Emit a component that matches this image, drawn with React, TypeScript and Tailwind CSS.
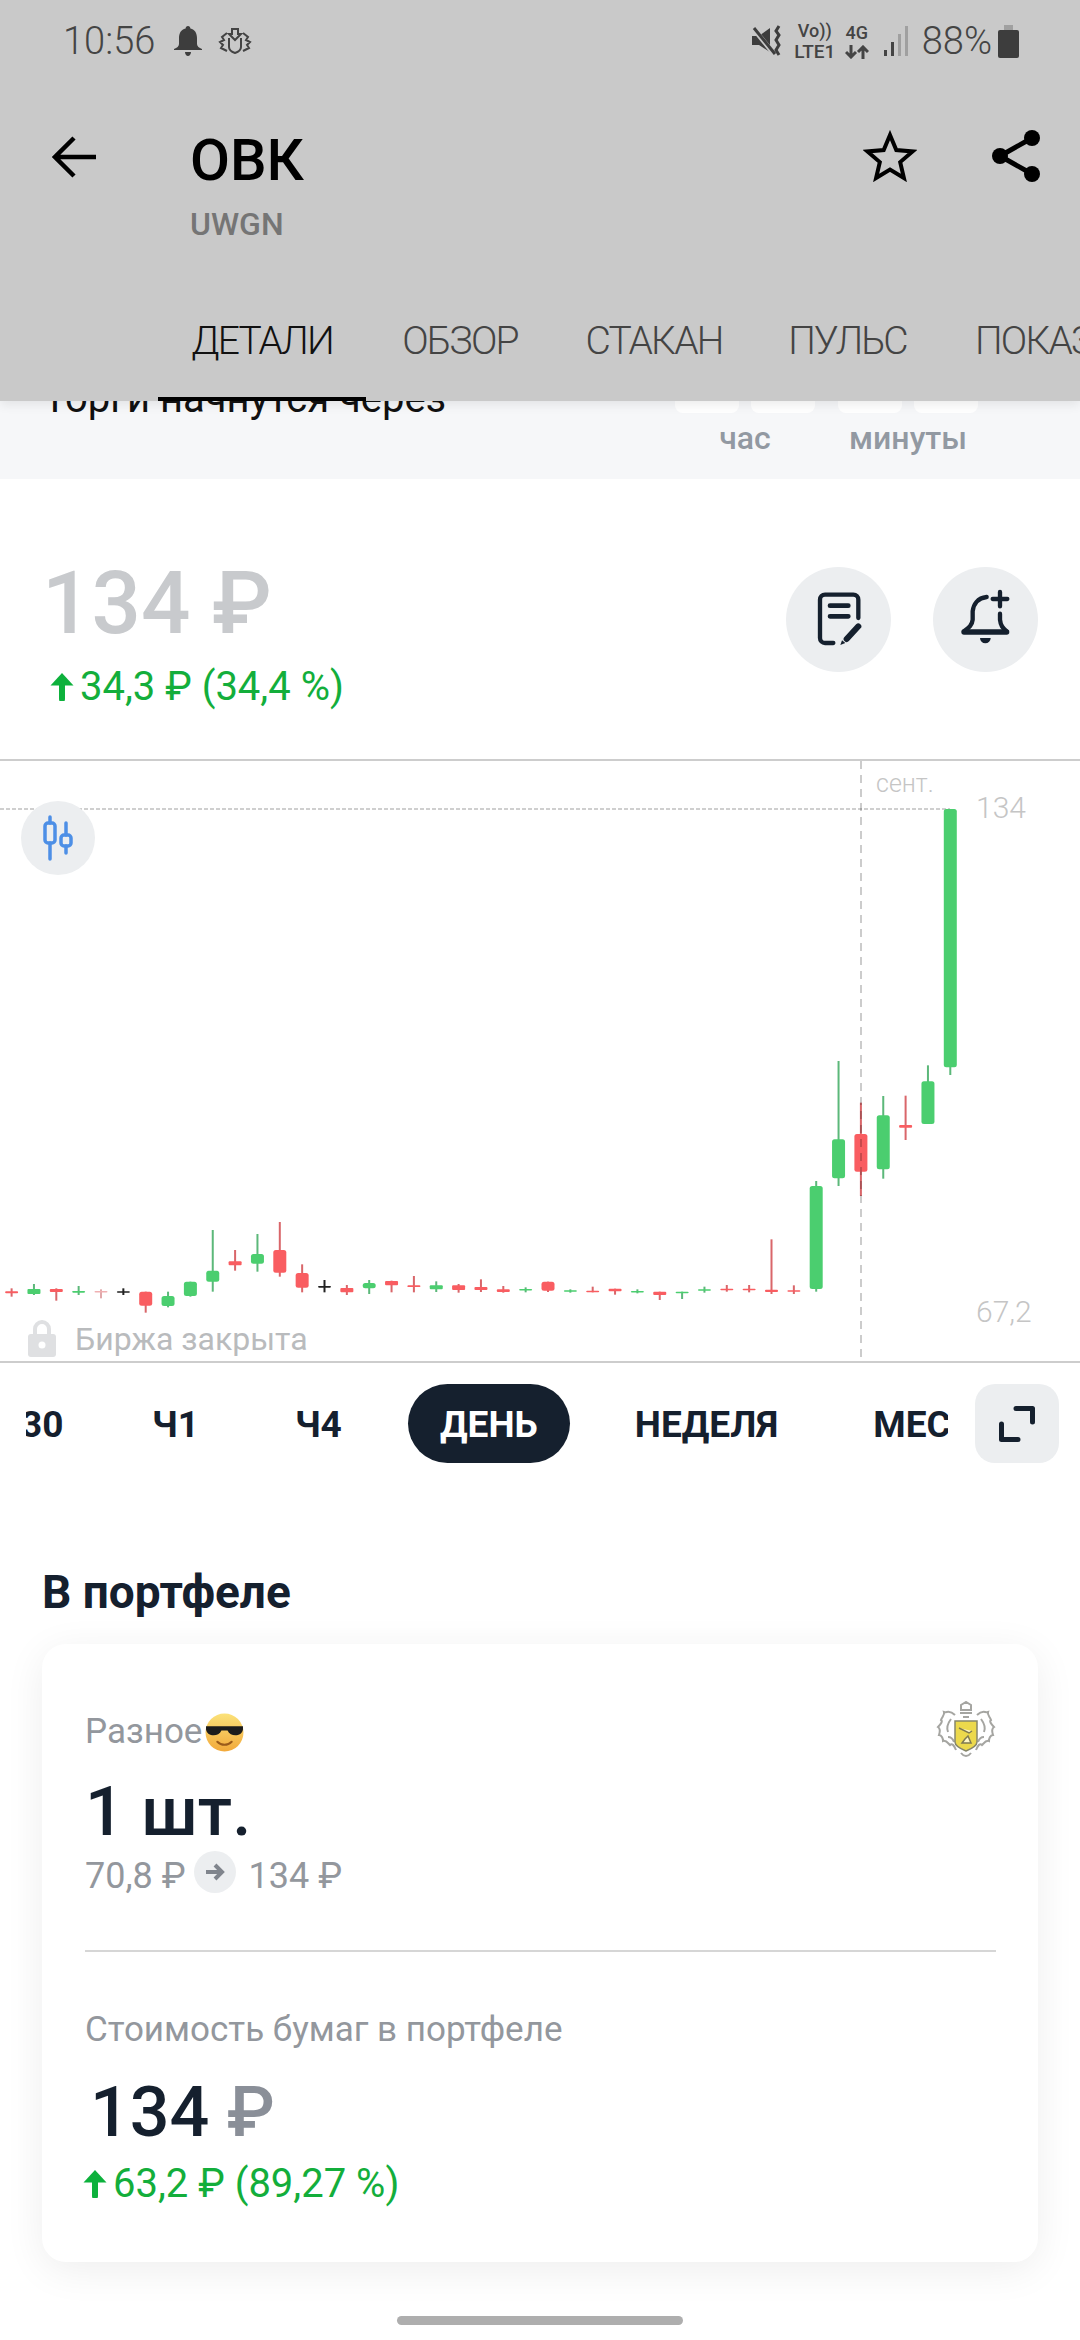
type Candle = [number, number, number, number, string];

// wick top, wick bottom, body top, body bottom, colour. y measured from 1160 on the left part, from 1000 on the right
const LEFT: Candle[] = [
  [385, 410, 394, 400, "r"], [372, 405, 387, 402, "g"], [385, 422, 387, 396, "r"], [378, 405, 393, 398, "g"],
  [388, 415, 393, 396, "l"], [385, 405, 394, 397, "k"], [395, 458, 395, 437, "r"], [395, 442, 408, 438, "g"],
  [365, 410, 365, 408, "g"], [210, 395, 332, 365, "g"], [270, 332, 304, 316, "r"], [222, 335, 282, 311, "g"],
  [186, 350, 270, 338, "r"], [313, 397, 339, 383, "r"], [360, 397, 378, 383, "k"], [375, 405, 384, 397, "r"],
  [360, 402, 369, 385, "g"], [362, 397, 363, 376, "r"], [348, 397, 376, 381, "r"], [364, 396, 376, 388, "g"],
  [372, 398, 376, 390, "r"], [358, 396, 381, 390, "r"], [378, 398, 388, 396, "r"], [382, 397, 387, 390, "g"],
];
const RIGHT: Candle[] = [
  [845, 876, 845, 872, "r"], [868, 878, 871, 874, "g"], [860, 877, 872, 875, "r"], [866, 884, 866, 874, "r"],
  [868, 880, 873, 876, "g"], [875, 900, 875, 885, "r"], [875, 897, 875, 878, "g"], [860, 878, 868, 872, "g"],
  [855, 875, 866, 870, "r"], [855, 877, 866, 870, "r"], [718, 882, 869, 876, "r"], [856, 882, 871, 874, "r"],
  [543, 875, 558, 867, "g"], [183, 558, 418, 535, "g"], [308, 588, 402, 515, "r"], [288, 536, 346, 508, "g"],
  [287, 420, 375, 383, "r"], [196, 372, 244, 372, "g"], [-573, 225, -573, 202, "g"],
];

const BODY: Record<string, string> = { r: "#f95d61", g: "#4bce6f", l: "#f0b0b2", k: "#222222" };
const WICK: Record<string, string> = { r: "#d9666a", g: "#5cb87a", l: "#e0a8aa", k: "#222222" };

function Candles() {
  const all = [
    ...LEFT.map((c) => ({ c, base: 1160 - 761 })),
    ...RIGHT.map((c) => ({ c, base: 1000 - 761 })),
  ];
  return (
    <svg className="absolute inset-0" width="1080" height="600" viewBox="0 0 1080 600">
      <line x1="0" y1="48" x2="950" y2="48" stroke="#cfcfcf" strokeWidth="2" strokeDasharray="4 2" />
      {all.map(({ c, base }, i) => {
        const x = 11.6 + 22.35 * i;
        const [wt, wb, bt, bb, col] = c;
        return (
          <g key={i}>
            <rect x={x - 1} y={base + wt / 3} width="2" height={(wb - wt) / 3} fill={WICK[col]} />
            <rect
              x={x - 6.5}
              y={base + bt / 3}
              width="13"
              height={Math.max((bb - bt) / 3, 1.5)}
              rx={(bb - bt) / 3 > 5 ? 2.5 : 1}
              fill={BODY[col]}
            />
          </g>
        );
      })}
      <line x1="861" y1="0" x2="861" y2="600" stroke="#000" strokeOpacity="0.2" strokeWidth="2" strokeDasharray="8 6" />
    </svg>
  );
}

function ArrowUp() {
  return (
    <svg width="24" height="28" viewBox="0 0 24 28" className="shrink-0">
      <path d="M12 26V8" stroke="#0db13c" strokeWidth="6" strokeLinecap="round" />
      <path d="M12 0L23.500 12.500H0.500Z" fill="#0db13c" />
    </svg>
  );
}

function Crest() {
  return (
    <svg width="60" height="58" viewBox="0 0 60 58" fill="none" stroke="#a5a5a1">
      <path d="M25 9V4l5-3 5 3v5z" strokeWidth="2" />
      <path d="M24 12h12M27 16h6" strokeWidth="2" />
      <path d="M19 14C13 8 11 12 8 11c1 3-2 5-3 8 2 1 0 4-3 7 3 2 2 5 1 8 3 0 4 4 4 6 3-1 5 2 7 4 2-2 4 0 6 5" strokeWidth="2" />
      <path d="M41 14C47 8 49 12 52 11c-1 3 2 5 3 8-2 1 0 4 3 7-3 2-2 5-1 8-3 0-4 4-4 6-3-1-5 2-7 4-2-2-4 0-6 5" strokeWidth="2" />
      <path d="M15 18c-3 4-5 8-3 13M45 18c3 4 5 8 3 13M12 36c3 0 5 2 6 5M48 36c-3 0-5 2-6 5" strokeWidth="2" />
      <path d="M25 52c3 4 7 4 10 0" strokeWidth="2" />
      <path d="M19 20H41V41C41 45 35 48 30 50C25 48 19 45 19 41Z" fill="#ecd94c" stroke="#86866a" strokeWidth="1.500" />
      <path d="M23 27l10 5 3-2M26 42h9l-3-7-3 3z" stroke="#7f7a50" strokeWidth="1.500" fill="#fff8c8" />
    </svg>
  );
}

function Emoji() {
  return (
    <svg width="39" height="39" viewBox="0 0 38 38" className="shrink-0">
      <defs>
        <linearGradient id="face" x1="0" y1="0" x2="0" y2="1">
          <stop offset="0" stopColor="#fbe27a" />
          <stop offset="1" stopColor="#f2a93a" />
        </linearGradient>
      </defs>
      <circle cx="19" cy="19" r="18.5" fill="url(#face)" />
      <path d="M1 13H37V16C36 23 25 24 22 17H16C13 24 2 23 1 16Z" fill="#1c1c1c" />
      <path d="M12 28C16 32 22 32 26 28" stroke="#9a5a1a" strokeWidth="2" fill="none" strokeLinecap="round" />
    </svg>
  );
}

export default function App() {
  return (
    <div className="relative h-[2340px] w-[1080px] overflow-hidden bg-white font-['Roboto',sans-serif] text-[#15202e]">
      {/* header */}
      <header className="relative z-10 h-[401px] bg-[#c9c9c9] shadow-[0_4px_10px_rgba(0,0,0,0.08)]">
        <div className="flex h-[82px] items-center pl-[63px] pr-[61px] text-[#444444]">
          <span className="text-[38px] font-light leading-none">10:56</span>
          <svg width="28" height="30" viewBox="0 0 28 30" className="ml-[19px]" fill="#3d3d3d">
            <path d="M14 0c1.500 0 2.300 1 2.400 2.400C21 3.500 23 7 23 12v6c0 2 2 4 5 5v1H0v-1c3-1 5-3 5-5v-6c0-5 2-8.500 6.600-9.600C11.700 1 12.500 0 14 0zM11 26h6c0 2-1.300 4-3 4s-3-2-3-4z" />
          </svg>
          <svg width="34" height="28" viewBox="0 0 34 28" className="ml-[16px]" fill="none" stroke="#444" strokeWidth="2">
            <path d="M14 2h6v5h3l-6 6-6-6h3zM11 11v9c0 3 3 5 6 6 3-1 6-3 6-6v-9" />
            <path d="M9 6L4 10l2 3-4 2 3 3-2 3 6 3M25 6l5 4-2 3 4 2-3 3 2 3-6 3" />
          </svg>
          <div className="ml-auto flex items-center">
            <svg width="32" height="32" viewBox="0 0 32 32" fill="none">
              <path d="M0 11h7l11-8v24L7 20H0z" fill="#3d3d3d" />
              <path d="M1 3l21 26" stroke="#c9c9c9" strokeWidth="5" />
              <path d="M2 3l21 26" stroke="#3d3d3d" strokeWidth="3" />
              <path d="M27 1l-3 5 3 4-3 5 3 5-3 5 3 5" stroke="#3d3d3d" strokeWidth="3" />
            </svg>
            <div className="ml-[11px] flex w-[40px] flex-col items-center font-medium leading-none text-[#444444]">
              <span className="text-[18px]">Vo))</span>
              <span className="mt-[2px] text-[19px]">LTE1</span>
            </div>
            <div className="ml-[10px] flex w-[24px] flex-col items-center font-medium leading-none text-[#444444]">
              <span className="text-[18px]">4G</span>
              <svg width="24" height="14" viewBox="0 0 24 14" fill="none" stroke="#444" strokeWidth="3" className="mt-[3px]">
                <path d="M6 0V12M1 7l5 5 5-5M18 14V2M13 7l5-5 5 5" />
              </svg>
            </div>
            <div className="ml-[15px] flex h-[30px] items-end gap-[4px]">
              <div className="h-[6px] w-[3px] bg-[#444444]" />
              <div className="h-[14px] w-[3px] bg-[#444444]" />
              <div className="h-[22px] w-[3px] bg-[#a0a0a0]" />
              <div className="h-[30px] w-[3px] bg-[#a0a0a0]" />
            </div>
            <span className="ml-[14px] text-[38px] font-light leading-none">88%</span>
            <div className="ml-[6px] flex w-[21px] flex-col items-center">
              <div className="h-[5px] w-[9px] bg-[#a0a0a0]" />
              <div className="h-[28px] w-[21px] rounded-[2px] bg-[#3d3d3d]" />
            </div>
          </div>
        </div>

        <div className="flex h-[190px] items-start pl-[52px] pr-[40px]">
          <svg width="44" height="42" viewBox="0 0 44 42" className="mt-[54px]" fill="none" stroke="#000" strokeWidth="4.5">
            <path d="M44 21H4M22 2L3 21l19 19" />
          </svg>
          <div className="ml-[94px] mt-[46px]">
            <div className="text-[58px] font-medium leading-[64px] text-black">ОВК</div>
            <div className="mt-[14px] text-[32px] font-medium leading-[36px] text-[#757575]">UWGN</div>
          </div>
          <svg width="54" height="52" viewBox="0 0 54 52" className="ml-auto mt-[48px]" fill="none" stroke="#000" strokeWidth="4">
            <path d="M27 5l6.300 15 16.200 1.400-12.300 10.700 3.700 15.900L27 39.500 13.100 48l3.700-15.900L4.500 21.400 20.700 20z" />
          </svg>
          <svg width="48" height="52" viewBox="0 0 48 52" className="ml-[75px] mt-[48px]" fill="#000">
            <circle cx="40" cy="8" r="8" />
            <circle cx="8" cy="26" r="8" />
            <circle cx="40" cy="44" r="8" />
            <path d="M40 8L8 26l32 18" fill="none" stroke="#000" strokeWidth="5" />
          </svg>
        </div>

        <div className="flex h-[129px] overflow-hidden pl-[158px] text-[39px] font-light tracking-[-1.8px]">
          <div className="flex h-full w-[208px] shrink-0 items-center justify-center border-b-4 border-black pt-[14px] text-[#111111]">
            ДЕТАЛИ
          </div>
          <div className="flex h-full w-[188px] shrink-0 items-center justify-center pt-[10px] text-[#444444]">ОБЗОР</div>
          <div className="flex h-full w-[200px] shrink-0 items-center justify-center pt-[10px] text-[#444444]">СТАКАН</div>
          <div className="flex h-full w-[187px] shrink-0 items-center justify-center pt-[10px] text-[#444444]">ПУЛЬС</div>
          <div className="flex h-full shrink-0 items-center pl-[34px] pt-[10px] text-[#444444]">ПОКАЗАТЕЛИ</div>
        </div>
      </header>

      {/* trading countdown, runs under the header */}
      <div className="-mt-[60px] flex h-[138px] justify-between bg-[#f6f7f9] pl-[43px] pr-[102px]">
        <div className="mt-[36px] text-[40px] leading-[44px] text-[#111111]">Торги начнутся через</div>
        <div className="flex gap-[23px]">
          {["час", "минуты"].map((label) => (
            <div key={label} className="flex w-[140px] flex-col items-center">
              <div className="mt-[12px] flex gap-[12px]">
                <div className="h-[60px] w-[64px] rounded-[8px] bg-white" />
                <div className="h-[60px] w-[64px] rounded-[8px] bg-white" />
              </div>
              <span className="mt-[7px] text-[32px] font-medium leading-[36px] text-[#9299a2]">{label}</span>
            </div>
          ))}
        </div>
      </div>

      {/* price */}
      <div className="flex h-[280px] pl-[42px] pr-[42px]">
        <div>
          <div className="mt-[76px] text-[87px] font-medium leading-[96px] text-[#c8cacd]">134 ₽</div>
          <div className="mt-[14px] flex items-center text-[40px] leading-[44px] text-[#13ae3b]">
            <div className="ml-[8px] mr-[6px]">
              <ArrowUp />
            </div>
            34,3 ₽ (34,4 %)
          </div>
        </div>
        <div className="ml-auto mt-[88px] flex gap-[42px]">
          <div className="h-[105px] w-[105px] rounded-full bg-[#eceef0]">
            <svg width="105" height="105" viewBox="78 82 315 315" fill="none" stroke="#15202e" strokeLinecap="round">
              <path d="M220 310H195a15 15 0 0 1-15-15V180a15 15 0 0 1 15-15H280a15 15 0 0 1 15 15V235" strokeWidth="13" />
              <path d="M210 198H265M210 230H265" strokeWidth="14" />
              <path d="M260 298L295 260" strokeWidth="18" />
              <path d="M241 316L246 302 256 310Z" fill="#15202e" stroke="none" />
            </svg>
          </div>
          <div className="h-[105px] w-[105px] rounded-full bg-[#eceef0]">
            <svg width="105" height="105" viewBox="519 82 315 315" fill="none" stroke="#15202e" strokeLinecap="round">
              <path d="M680 172C652 175 640 195 638 215V240C636 258 625 265 612 275M720 222V240C722 258 728 265 740 275" strokeWidth="13" />
              <path d="M612 277H740" strokeWidth="16" />
              <path d="M660 295H692a16 16 0 0 1-32 0Z" fill="#15202e" stroke="none" />
              <path d="M720 157V200M698 178H742" strokeWidth="13" />
            </svg>
          </div>
        </div>
      </div>

      {/* chart */}
      <div className="relative h-[604px] border-y-2 border-[#cdcdcd]">
        <Candles />
        <div className="absolute left-[21px] top-[40px] flex h-[74px] w-[74px] items-center justify-center rounded-full bg-[#eceef0]">
          <svg width="36" height="46" viewBox="0 0 36 46" fill="none" stroke="#4d8fe6" strokeWidth="3.500" strokeLinecap="round">
            <path d="M10 2V8M10 28V44M26 8V20M26 31V38" />
            <rect x="5" y="8" width="10" height="20" rx="3" />
            <rect x="21" y="20" width="10" height="11" rx="3" />
          </svg>
        </div>
        <span className="absolute left-[876px] top-[8px] text-[25px] font-light leading-[30px] text-[#c5c5c5]">сент.</span>
        <span className="absolute left-[976px] top-[29px] text-[30px] font-light leading-[36px] text-[#c5c5c5]">134</span>
        <span className="absolute left-[976px] top-[533px] text-[30px] font-light leading-[36px] text-[#c5c5c5]">67,2</span>
        <div className="absolute bottom-[4px] left-[28px] flex items-center gap-[19px]">
          <svg width="28" height="37" viewBox="0 0 28 37">
            <path d="M7 15V9a7 7 0 0 1 14 0v6" fill="none" stroke="#dfe0e2" strokeWidth="4" />
            <rect y="14" width="28" height="23" rx="3" fill="#dfe0e2" />
            <circle cx="14" cy="25" r="3.500" fill="#fff" />
          </svg>
          <span className="text-[32px] leading-[36px] text-[#b9bbbd]">Биржа закрыта</span>
        </div>
      </div>

      {/* ranges */}
      <div className="flex h-[101px] pt-[21px]">
        <div className="ml-[26px] flex h-[79px] w-[922px] items-center overflow-hidden text-[37px] font-bold">
          <span className="-ml-[5px] w-[35px] shrink-0 pt-[3px]">30</span>
          <span className="ml-[96px] shrink-0 pt-[3px]">Ч1</span>
          <span className="ml-[96px] shrink-0 pt-[3px]">Ч4</span>
          <span className="ml-[66px] flex h-[79px] w-[162px] shrink-0 items-center justify-center rounded-full bg-[#15202e] pt-[3px] text-white">
            ДЕНЬ
          </span>
          <span className="ml-[65px] shrink-0 pt-[3px]">НЕДЕЛЯ</span>
          <span className="ml-[95px] shrink-0 pt-[3px]">МЕСЯЦ</span>
        </div>
        <div className="ml-[27px] flex h-[79px] w-[84px] items-center justify-center rounded-[20px] bg-[#eceef0]">
          <svg width="36" height="36" viewBox="0 0 36 36" fill="none" stroke="#15202e" strokeWidth="5" strokeLinecap="round" strokeLinejoin="round">
            <path d="M17 2.500H33.500V16M2.500 18V33.500H19" />
          </svg>
        </div>
      </div>

      {/* portfolio */}
      <div className="mt-[102px] pl-[42px] text-[46px] font-bold leading-[52px]">В портфеле</div>
      <div className="mx-[42px] mt-[26px] h-[618px] rounded-[24px] bg-white pl-[43px] pr-[42px] shadow-[0_8px_40px_rgba(0,0,0,0.07)]">
        <div className="flex items-start justify-between pt-[57px]">
          <div className="mt-[11px] flex items-center gap-[3px] text-[35px] leading-[40px] text-[#93979d]">
            Разное
            <Emoji />
          </div>
          <Crest />
        </div>
        <div className="mt-[13px] text-[69px] font-medium leading-[80px]">1 шт.</div>
        <div className="mt-[3px] flex items-center text-[36px] leading-[42px] text-[#93979d]">
          70,8 ₽
          <span className="ml-[8px] mr-[13px] flex h-[42px] w-[42px] -translate-y-[4px] items-center justify-center rounded-full bg-[#eceef0]">
            <svg width="20" height="20" viewBox="0 0 20 20" fill="none" stroke="#80858d" strokeWidth="4">
              <path d="M1 10H17M10 3l7 7-7 7" />
            </svg>
          </span>
          134 ₽
        </div>
        <div className="mt-[53px] h-[2px] bg-[#d6d6d6]" />
        <div className="mt-[58px] text-[35px] leading-[40px] text-[#93979d]">Стоимость бумаг в портфеле</div>
        <div className="ml-[5px] mt-[20px] text-[70px] font-medium leading-[84px]">
          134 <span className="text-[#8a8f98]">₽</span>
        </div>
        <div className="-ml-[2px] mt-[8px] flex items-center text-[40px] leading-[44px] text-[#13ae3b]">
          <div className="mr-[6px]">
            <ArrowUp />
          </div>
          63,2 ₽ (89,27 %)
        </div>
      </div>

      <div className="mx-auto mt-[54px] h-[9px] w-[286px] rounded-full bg-[#aeaeae]" />
    </div>
  );
}
